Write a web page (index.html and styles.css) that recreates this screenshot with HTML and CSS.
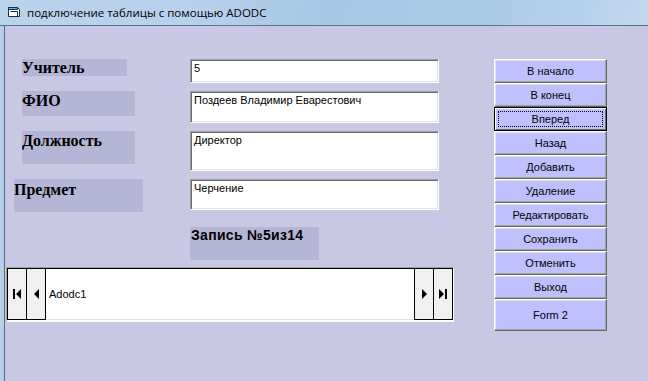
FILE: index.html
```html
<!DOCTYPE html>
<html lang="ru">
<head>
    <meta charset="UTF-8">
    <title>подключение таблицы с помощью ADODC</title>
    <link rel="stylesheet" href="styles.css">
</head>
<body>
<div class="window">
    <div class="titlebar">
        <svg class="title-icon" width="14" height="12" viewBox="0 0 14 12">
            <path d="M1.5 1.5h9l2 2v7h-11z" fill="#fff" stroke="#1c2a3a"/>
            <path d="M1.5 1.5h9v2h-9z" fill="#3ec8e8" stroke="#1c2a3a"/>
            <path d="M3.5 5.5h7v5" fill="none" stroke="#1c2a3a"/>
        </svg>
        <span class="title-text">подключение таблицы с помощью ADODC</span>
    </div>
    <div class="frame">
        <div class="client">
            <div class="left">
                <div class="fields">
                    <div class="row">
                        <div class="label label-teacher">Учитель</div>
                        <div class="textbox tb-1">5</div>
                    </div>
                    <div class="row">
                        <div class="label label-fio">ФИО</div>
                        <div class="textbox tb-2">Поздеев Владимир Еварестович</div>
                    </div>
                    <div class="row">
                        <div class="label label-post">Должность</div>
                        <div class="textbox tb-3">Директор</div>
                    </div>
                    <div class="row">
                        <div class="label label-subject">Предмет</div>
                        <div class="textbox tb-4">Черчение</div>
                    </div>
                </div>
                <div class="record">Запись №5из14</div>
                <div class="adodc">
                    <div class="nav">
                        <svg width="8" height="10" viewBox="0 0 8 10"><rect x="0" y="0" width="2" height="10" fill="#000"/><path d="M8 0v10L3 5z" fill="#000"/></svg>
                    </div>
                    <div class="nav">
                        <svg width="5" height="10" viewBox="0 0 5 10"><path d="M5 0v10L0 5z" fill="#000"/></svg>
                    </div>
                    <div class="caption">Adodc1</div>
                    <div class="nav">
                        <svg width="5" height="10" viewBox="0 0 5 10"><path d="M0 0v10L5 5z" fill="#000"/></svg>
                    </div>
                    <div class="nav">
                        <svg width="8" height="10" viewBox="0 0 8 10"><path d="M0 0v10L5 5z" fill="#000"/><rect x="6" y="0" width="2" height="10" fill="#000"/></svg>
                    </div>
                </div>
            </div>
            <div class="buttons">
                <div class="btn">В начало</div>
                <div class="btn">В конец</div>
                <div class="btn btn-focus"><span class="focus-rect">Вперед</span></div>
                <div class="btn">Назад</div>
                <div class="btn">Добавить</div>
                <div class="btn">Удаление</div>
                <div class="btn">Редактировать</div>
                <div class="btn">Сохранить</div>
                <div class="btn">Отменить</div>
                <div class="btn">Выход</div>
                <div class="btn btn-tall">Form 2</div>
            </div>
        </div>
    </div>
</div>
</body>
</html>
```

FILE: styles.css
```css
body {
    margin: 0;
    padding: 0;
    width: 648px;
    height: 381px;
    overflow: hidden;
    background-color: #c8c8e4;
    font-family: "Liberation Sans", Arial, sans-serif;
}
.window {
    display: flex;
    flex-direction: column;
    height: 381px;
}
.titlebar {
    display: flex;
    align-items: center;
    background: linear-gradient(100deg, #b9d3ec 0%, #b6d1eb 30%, #a8c6e2 50%, #adcae5 75%, #b6d2ea 90%, #c2d9ee 100%);
    border-bottom: 1px solid #5f7388;
    box-sizing: border-box;
    height: 26px;
}
.title-icon {
    margin-left: 7px;
    margin-top: -1px;
}
.title-text {
    margin-left: 6px;
    font-family: "Open Sans", "Noto Sans", sans-serif;
    font-size: 11.5px;
    color: #000;
    margin-top: -1px;
}
.frame {
    flex: 1;
    display: flex;
    border-left: 4px solid #b5d0ea;
}
.client {
    flex: 1;
    display: flex;
    border-left: 1px solid #56687c;
    background-color: #c8c8e4;
}
.left {
    width: 489px;
    padding-top: 33px;
    box-sizing: border-box;
}
.fields {
    display: flex;
    flex-direction: column;
    gap: 8px;
}
.row {
    display: grid;
    grid-template-columns: 185px 249px;
    align-items: start;
}
.label {
    background-color: #b5b5d5;
    font-family: "Liberation Serif", "Times New Roman", serif;
    font-weight: bold;
    font-size: 16px;
    line-height: 18px;
    color: #000;
    box-sizing: border-box;
}
.label-teacher {
    margin-left: 17px;
    width: 105px;
    height: 17px;
}
.label-fio {
    margin-left: 17px;
    width: 113px;
    height: 25px;
    padding-top: 1px;
}
.label-post {
    margin-left: 17px;
    width: 113px;
    height: 33px;
    padding-top: 1px;
}
.label-subject {
    margin-left: 9px;
    width: 129px;
    height: 33px;
    padding-top: 2px;
}
.textbox {
    background-color: #fff;
    border: 1px solid;
    border-color: #a0a0a0 #fff #fff #a0a0a0;
    box-shadow: inset 1px 1px 0 #696969, inset -1px -1px 0 #e3e3e3;
    box-sizing: border-box;
    font-size: 11px;
    line-height: 13px;
    padding: 2px 3px;
    color: #000;
}
.tb-1 { height: 24px; }
.tb-2 { height: 32px; }
.tb-3 { height: 40px; }
.tb-4 { height: 31px; }
.record {
    margin-top: 15px;
    margin-left: 185px;
    width: 129px;
    height: 33px;
    background-color: #b5b5d5;
    font-weight: bold;
    font-size: 14px;
    letter-spacing: 0.3px;
    line-height: 15px;
    padding-top: 1px;
    padding-left: 1px;
    box-sizing: border-box;
}
.adodc {
    margin-top: 7px;
    margin-left: 1px;
    width: 448px;
    height: 55px;
    box-sizing: border-box;
    display: flex;
    background-color: #fff;
    border: 1px solid;
    border-color: #a0a0a0 #fff #fff #a0a0a0;
    padding-bottom: 1px;
}
.nav {
    width: 20px;
    box-sizing: border-box;
    border: 1px solid #000;
    background-color: #f0f0f0;
    display: flex;
    align-items: center;
    justify-content: center;
}
.nav + .nav {
    border-left: none;
    width: 19px;
}
.caption {
    flex: 1;
    display: flex;
    align-items: center;
    padding-left: 3px;
    font-size: 11px;
    border-top: 1px solid #000;
    border-bottom: 1px solid #e3e3e3;
}
.buttons {
    margin-top: 33px;
    width: 113px;
    display: flex;
    flex-direction: column;
}
.btn {
    height: 24px;
    box-sizing: border-box;
    background-color: #c0c0ff;
    border: 1px solid;
    border-color: #fff #696969 #696969 #fff;
    box-shadow: inset -1px -1px 0 #a0a0a0, inset 1px 1px 0 #e3e3e3;
    font-size: 11px;
    line-height: 13px;
    padding-top: 5px;
    text-align: center;
    color: #000;
}
.btn-focus {
    border: 1px solid #000;
    box-shadow: inset 1px 1px 0 #fff, inset -1px -1px 0 #696969;
    padding: 3px 3px 0;
}
.focus-rect {
    display: block;
    height: 16px;
    box-sizing: border-box;
    border: 1px dotted #000;
    padding-top: 1px;
}
.btn-tall {
    height: 32px;
    padding-top: 9px;
}
```
